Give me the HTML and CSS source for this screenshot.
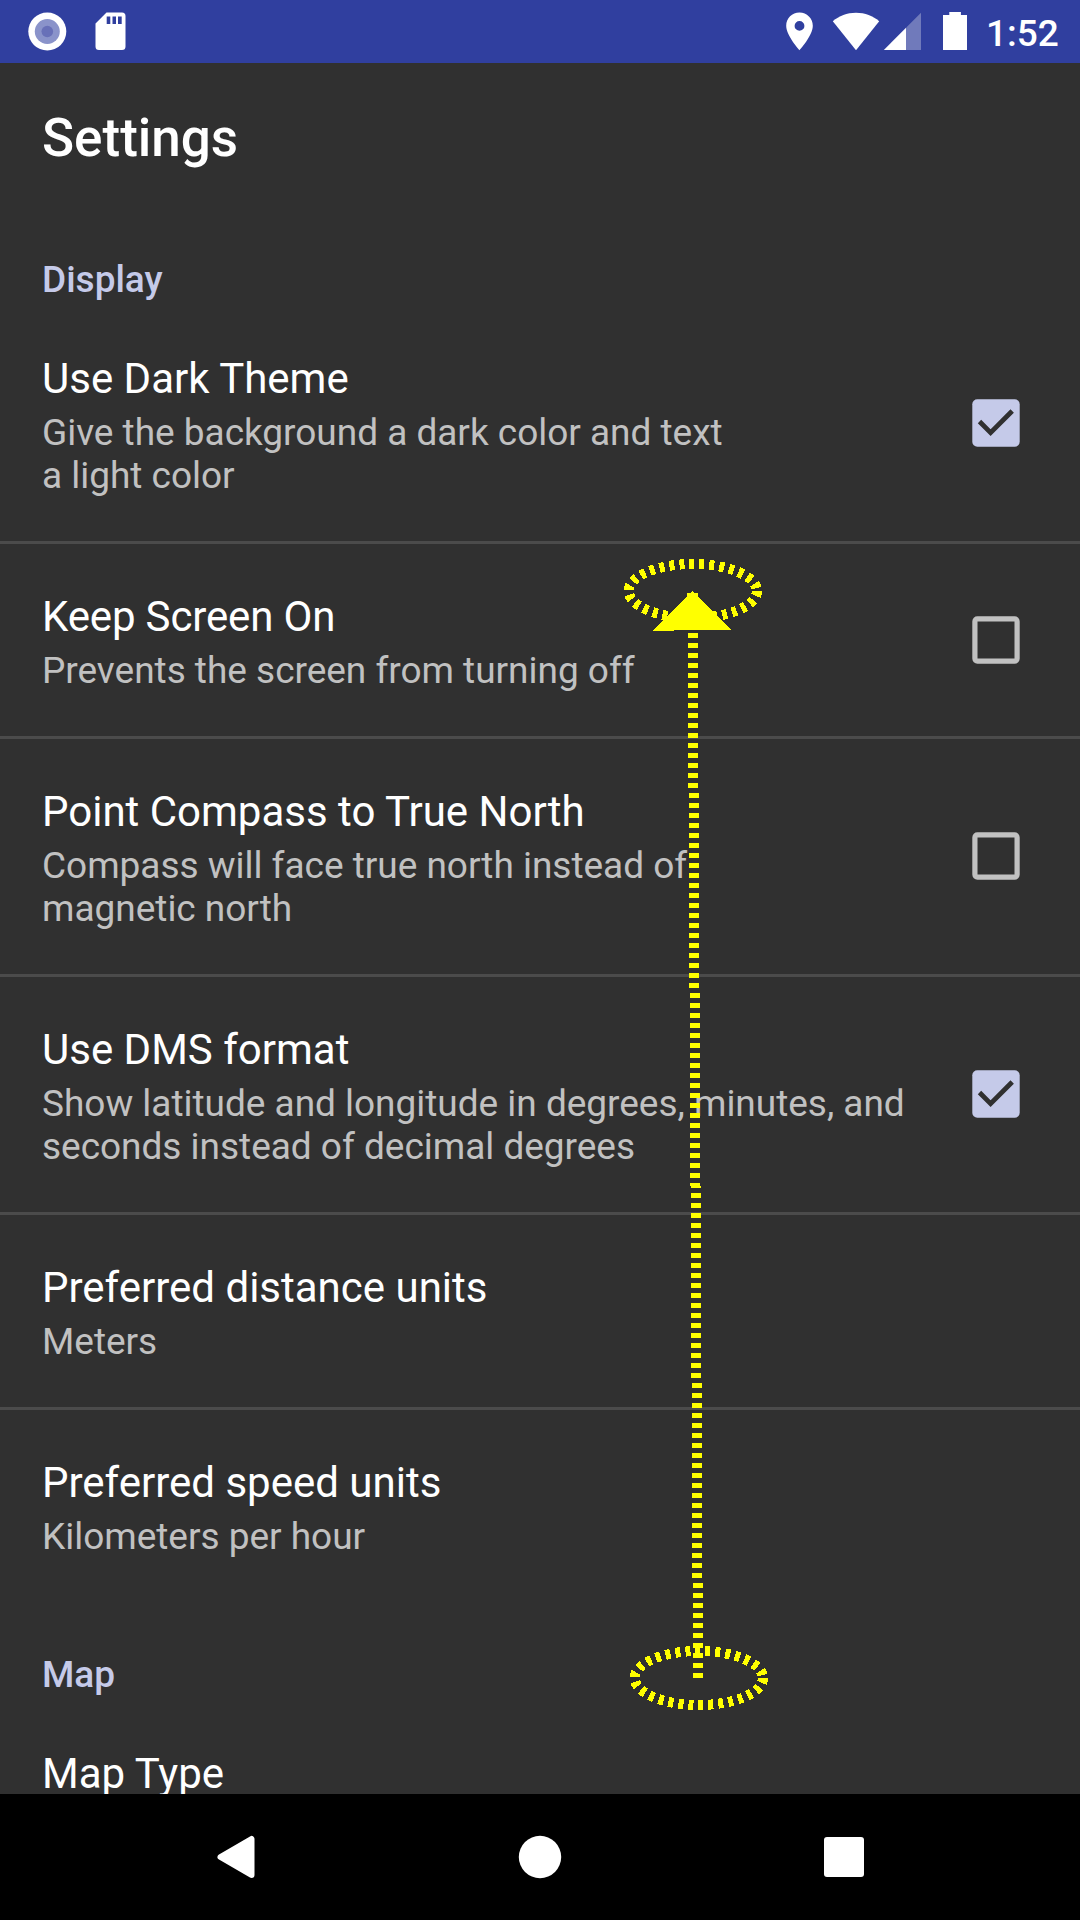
FILE: index.html
```html
<!DOCTYPE html>
<html lang="en">
<head>
<meta charset="utf-8">
<title>Settings</title>
<link rel="stylesheet" href="styles.css">
</head>
<body>
<div class="screen">
  <header class="status-bar">
    <svg class="status-icons-left" width="200" height="63" viewBox="0 0 200 63">
      <circle cx="47.3" cy="31.5" r="19" fill="#fff"/>
      <circle cx="47.3" cy="31.5" r="12.5" fill="#8a93ca"/>
      <circle cx="47.3" cy="31.5" r="5.8" fill="#6870b8"/>
      <path fill="#fff" fill-rule="evenodd" d="M106.500 12.500H122a3.500 3.500 0 0 1 3.500 3.500V46.500a3.500 3.500 0 0 1-3.500 3.500H99a3.500 3.500 0 0 1-3.500-3.500V23.500zM106.700 16.500v7.500h3.600v-7.500zM112.500 16.500v7.500h3.500v-7.500zM118 16.500v7.500h3.700v-7.500z"/>
    </svg>
    <svg class="status-icons-right" width="220" height="63" viewBox="770 0 220 63">
      <path fill="#fff" fill-rule="evenodd" d="M799.500 12.500c-7.400 0-13.300 5.900-13.300 13.300 0 9.900 13.300 24.500 13.300 24.500s13.300-14.600 13.300-24.500c0-7.400-5.900-13.300-13.300-13.300zm0 8.500a4.900 4.900 0 1 1 0 9.800 4.900 4.900 0 0 1 0-9.800z"/>
      <path fill="#fff" d="M856 50.300 832.800 21.300C839 16 847 12.800 856 12.800s17 3.200 23.200 8.500z"/>
      <path fill="#707abb" d="M921 12.800V50H906V27.800z"/>
      <path fill="#fff" d="M883.800 50 906 27.800V50z"/>
      <path fill="#fff" d="M949.300 12h11.600v3H967v35H943V15h6.300z"/>
    </svg>
    <span class="clock">1:52</span>
  </header>

  <main class="content">
    <h1 class="title">Settings</h1>
    <h2 class="category">Display</h2>
    <section class="group">
      <div class="pref">
        <div class="pref-text">
          <div class="pref-title">Use Dark Theme</div>
          <div class="pref-summary">Give the background a dark color and text<br>a light color</div>
        </div>
        <svg class="checkbox" viewBox="0 0 48 48"><rect x=".3" y=".3" width="47.400" height="47.400" rx="5" fill="#c5cae9"/><path d="M7.500 22.500 18.600 33.600 40.200 12" fill="none" stroke="#303030" stroke-width="4.800"/></svg>
      </div>
      <div class="pref">
        <div class="pref-text">
          <div class="pref-title tight">Keep Screen On</div>
          <div class="pref-summary">Prevents the screen from turning off</div>
        </div>
        <svg class="checkbox" viewBox="0 0 48 48"><rect x="2.900" y="2.900" width="42.200" height="42.200" rx="2.500" fill="none" stroke="#c1c1c1" stroke-width="5.200"/></svg>
      </div>
      <div class="pref">
        <div class="pref-text">
          <div class="pref-title">Point Compass to True North</div>
          <div class="pref-summary">Compass will face true north instead of<br>magnetic north</div>
        </div>
        <svg class="checkbox" viewBox="0 0 48 48"><rect x="2.900" y="2.900" width="42.200" height="42.200" rx="2.500" fill="none" stroke="#c1c1c1" stroke-width="5.200"/></svg>
      </div>
      <div class="pref">
        <div class="pref-text">
          <div class="pref-title">Use DMS format</div>
          <div class="pref-summary">Show latitude and longitude in degrees, minutes, and<br>seconds instead of decimal degrees</div>
        </div>
        <svg class="checkbox" viewBox="0 0 48 48"><rect x=".3" y=".3" width="47.400" height="47.400" rx="5" fill="#c5cae9"/><path d="M7.500 22.500 18.600 33.600 40.200 12" fill="none" stroke="#303030" stroke-width="4.800"/></svg>
      </div>
      <div class="pref">
        <div class="pref-text">
          <div class="pref-title">Preferred distance units</div>
          <div class="pref-summary">Meters</div>
        </div>
      </div>
      <div class="pref">
        <div class="pref-text">
          <div class="pref-title">Preferred speed units</div>
          <div class="pref-summary">Kilometers per hour</div>
        </div>
      </div>
    </section>
    <h2 class="category">Map</h2>
    <section class="group">
      <div class="pref">
        <div class="pref-text">
          <div class="pref-title">Map Type</div>
        </div>
      </div>
    </section>
  </main>

  <nav class="nav-bar">
    <svg width="1080" height="126" viewBox="0 1794 1080 126">
      <path fill="#fff" stroke="#fff" stroke-width="6" stroke-linejoin="round" d="M251.500 1839V1875L220.500 1857z"/>
      <circle cx="540" cy="1857" r="21.200" fill="#fff"/>
      <rect x="824" y="1837" width="40" height="40" rx="3" fill="#fff"/>
    </svg>
  </nav>

  <svg class="swipe" width="1080" height="1920" viewBox="0 0 1080 1920" shape-rendering="crispEdges">
    <g fill="none" stroke="#ff0" stroke-width="10" stroke-dasharray="5 5">
      <ellipse cx="692.800" cy="591" rx="64.200" ry="27"/>
      <ellipse cx="698.800" cy="1678" rx="64.200" ry="27"/>
      <path d="M698 1678 692.500 593"/>
    </g>
    <path fill="#ff0" d="M653 630.700 687 597V593H690L692.500 591 695 593H697V595.500L731 630z"/>
  </svg>
</div>
</body>
</html>
```
FILE: styles.css
```css
* { box-sizing: border-box; }

body {
  margin: 0;
  background: #303030;
  font-family: Roboto, sans-serif;
}

.screen {
  position: relative;
  display: flex;
  flex-direction: column;
  width: 1080px;
  height: 1920px;
  overflow: hidden;
  color: #fff;
}

.status-bar {
  display: flex;
  flex: none;
  height: 63px;
  background: #303f9f;
}

.status-icons-left { margin-right: 570px; }

.clock {
  margin-left: -4px;
  padding-top: 12px;
  font-size: 37px;
  font-weight: 500;
  line-height: 43px;
}

.content {
  flex: 1;
  min-height: 0;
  overflow: hidden;
}

.title {
  height: 145px;
  margin: 0;
  padding: 45px 42px 0;
  font-size: 53px;
  font-weight: 500;
  line-height: 61px;
}

.category {
  height: 98px;
  margin: 0;
  padding: 50px 42px 0;
  color: #c5cae9;
  font-size: 37px;
  font-weight: 500;
  line-height: 43px;
}

.pref {
  display: flex;
  align-items: center;
  justify-content: space-between;
  padding: 0 60px 0 42px;
  border-bottom: 3px solid #4b4b4b;
}

.pref:last-child {
  padding-bottom: 1px;
  border-bottom: 0;
}

.pref-text { padding: 48px 0 44px; }

.pref-title {
  font-size: 42px;
  line-height: 49px;
}

.pref-title.tight { letter-spacing: -0.15px; }

.pref-summary {
  margin-top: 8px;
  color: #c1c1c1;
  font-size: 37px;
  letter-spacing: -0.02px;
  line-height: 43px;
  white-space: nowrap;
}

.checkbox {
  flex: none;
  width: 48px;
  height: 48px;
  margin-bottom: 1px;
}

.nav-bar {
  flex: none;
  height: 126px;
  background: #000;
}

.swipe {
  position: absolute;
  inset: 0;
  pointer-events: none;
}
```
